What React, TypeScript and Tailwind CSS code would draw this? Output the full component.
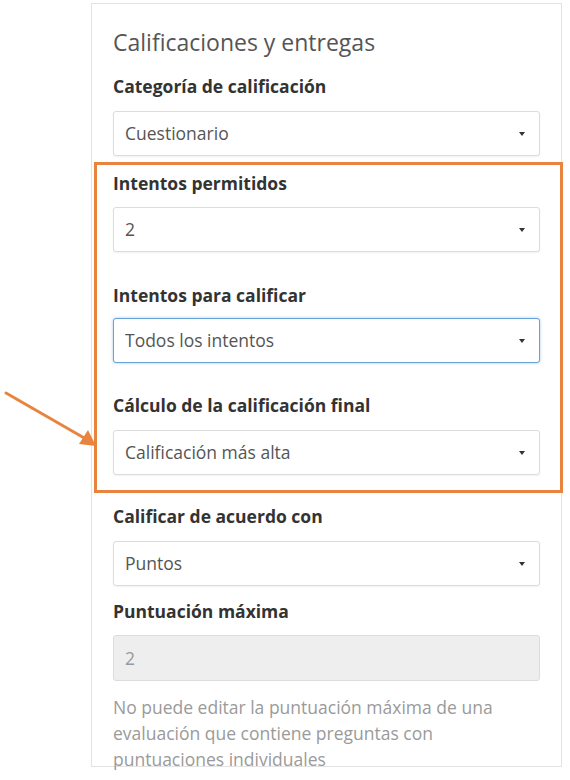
import React from "react";

const font = { fontFamily: '"Open Sans", "Noto Sans", sans-serif' };

function Caret() {
  return (
    <span className="inline-block w-0 h-0 border-l-[3px] border-r-[3px] border-t-[4px] border-l-transparent border-r-transparent border-t-[#333]" />
  );
}

function Select({ value, focused = false }: { value: string; focused?: boolean }) {
  return (
    <div
      className={
        "flex h-[45px] items-center justify-between rounded-[3px] bg-white pl-[11px] pr-[14px] text-[17.5px] text-[#555] " +
        (focused
          ? "border border-[#66a3d9] shadow-[0_0_3px_rgba(102,163,217,0.6)]"
          : "border border-[#dcdcdc] shadow-[0_1px_2px_rgba(0,0,0,0.06)]")
      }
    >
      <span>{value}</span>
      <Caret />
    </div>
  );
}

function Label({ children, className = "" }: { children: React.ReactNode; className?: string }) {
  return (
    <div className={"text-[17.5px] font-bold leading-[22px] text-[#333] " + className}>{children}</div>
  );
}

export default function App() {
  return (
    <div className="relative h-[780px] w-[570px] overflow-hidden bg-white" style={font}>
      <div className="ml-[91px] mt-[3px] w-[471px] border border-[#e3e3e3] pl-[21px] pr-[21px] pt-[23px]">
        <div className="text-[23px] leading-[30px] text-[#555]">Calificaciones y entregas</div>

        <Label className="mt-[18px] mb-[14px]">Categoría de calificación</Label>
        <Select value="Cuestionario" />

        <Label className="mt-[16px] mb-[13px]">Intentos permitidos</Label>
        <Select value="2" />

        <Label className="mt-[32px] mb-[12px]">Intentos para calificar</Label>
        <Select value="Todos los intentos" focused />

        <Label className="mt-[31px] mb-[14px]">Cálculo de la calificación final</Label>
        <Select value="Calificación más alta" />

        <Label className="mt-[30px] mb-[14px]">Calificar de acuerdo con</Label>
        <Select value="Puntos" />

        <Label className="mt-[14px] mb-[13px]">Puntuación máxima</Label>
        <div className="flex h-[46px] items-center rounded-[3px] border border-[#dcdcdc] bg-[#eeeeee] pl-[11px] text-[17.5px] text-[#999]">
          2
        </div>

        <p className="mt-[13px] mb-[-6px] max-w-[400px] text-[17.5px] leading-[26px] text-[#9a9a9a]">
          No puede editar la puntuación máxima de una evaluación que contiene preguntas con puntuaciones individuales
        </p>
      </div>

      {/* Orange highlight annotation */}
      <div className="absolute left-[94px] top-[162px] h-[331px] w-[469px] border-[3px] border-[#e8843e]" />

      {/* Arrow */}
      <svg className="absolute left-0 top-[385px]" width="110" height="70" viewBox="0 0 110 70">
        <line x1="6" y1="8" x2="86" y2="54" stroke="#e8843e" strokeWidth="3" strokeLinecap="round" />
        <polygon points="96,61 79,59 88,45" fill="#e8843e" />
      </svg>
    </div>
  );
}
